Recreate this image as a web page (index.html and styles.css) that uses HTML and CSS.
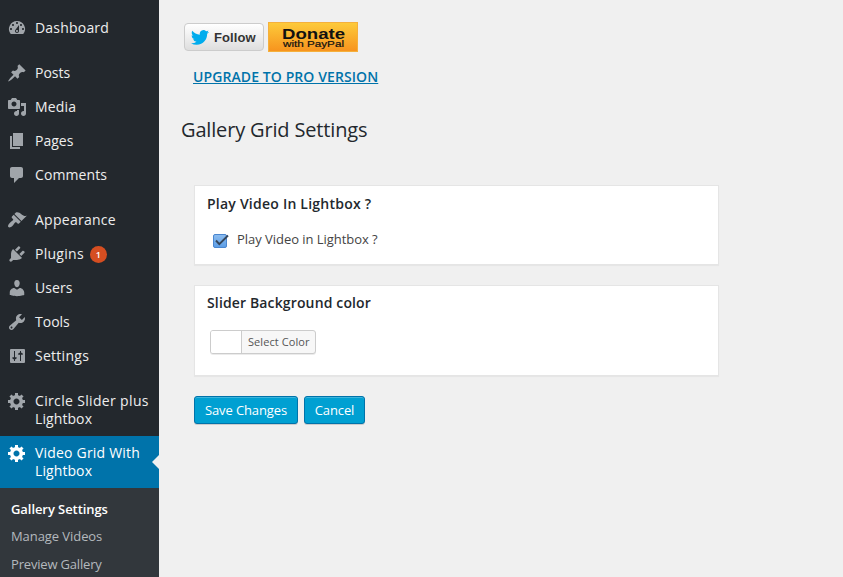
FILE: index.html
```html
<!DOCTYPE html>
<html lang="en">
<head>
<meta charset="utf-8">
<title>Gallery Grid Settings</title>
<link rel="stylesheet" href="styles.css">
</head>
<body>
<nav class="sidebar">
  <ul class="menu">
    <li class="item"><svg class="icon" viewBox="0 0 20 20"><path d="M3.76 16h12.48A7.998 7.998 0 0 0 10 3a7.998 7.998 0 0 0-6.24 13zM10 4c.55 0 1 .45 1 1s-.45 1-1 1-1-.45-1-1 .45-1 1-1zM6 6c.55 0 1 .45 1 1s-.45 1-1 1-1-.45-1-1 .45-1 1-1zm8 0c.55 0 1 .45 1 1s-.45 1-1 1-1-.45-1-1 .45-1 1-1zm-5.37 5.55L12 7v6c0 1.1-.9 2-2 2s-2-.9-2-2c0-.57.24-1.08.63-1.45zM4 10c.55 0 1 .45 1 1s-.45 1-1 1-1-.45-1-1 .45-1 1-1zm12 0c.55 0 1 .45 1 1s-.45 1-1 1-1-.45-1-1 .45-1 1-1zm-5 3c0-.55-.45-1-1-1s-1 .45-1 1 .45 1 1 1 1-.45 1-1z"/></svg><span class="loose">Dashboard</span></li>
    <li class="item group"><svg class="icon" viewBox="0 0 20 20"><path d="M10.44 3.02l1.82-1.82 6.36 6.35-1.83 1.82c-1.05-.68-2.48-.57-3.41.36l-.75.75c-.92.93-1.04 2.35-.35 3.41l-1.83 1.82-2.41-2.41-2.8 2.79c-.42.42-3.38 2.71-3.8 2.29s1.86-3.39 2.28-3.81l2.79-2.79L4.1 9.36l1.83-1.82c1.05.69 2.48.57 3.4-.36l.75-.75c.93-.92 1.05-2.35.36-3.41z"/></svg><span>Posts</span></li>
    <li class="item"><svg class="icon" viewBox="0 0 20 20"><path d="M13 11V4c0-.55-.45-1-1-1h-1.67L9 1H5L3.67 3H2c-.55 0-1 .45-1 1v7c0 .55.45 1 1 1h10c.55 0 1-.45 1-1zM7 4.5c1.38 0 2.5 1.12 2.5 2.5S8.38 9.5 7 9.5 4.5 8.38 4.5 7 5.62 4.5 7 4.5zM14 6h5v10.5c0 1.38-1.12 2.5-2.5 2.5S14 17.88 14 16.5s1.12-2.5 2.5-2.5c.17 0 .34.02.5.05V9h-3V6zm-4 8.05V13h2v3.5c0 1.38-1.12 2.5-2.5 2.5S7 17.88 7 16.5 8.12 14 9.5 14c.17 0 .34.02.5.05z"/></svg><span class="loose">Media</span></li>
    <li class="item"><svg class="icon" viewBox="0 0 20 20"><path d="M6 15V2h10v13H6zm-1 1h8v2H3V5h2v11z"/></svg><span>Pages</span></li>
    <li class="item"><svg class="icon" viewBox="0 0 20 20"><path d="M5 2h9c1.1 0 2 .9 2 2v7c0 1.1-.9 2-2 2h-2l-5 5v-5H5c-1.1 0-2-.9-2-2V4c0-1.1.9-2 2-2z"/></svg><span class="slight">Comments</span></li>
    <li class="item group"><svg class="icon" viewBox="0 0 20 20"><path d="M14.48 11.06L7.41 3.99l1.5-1.5c.5-.56 2.3-.47 3.51.32 1.21.8 1.43 1.28 2.91 2.1 1.18.64 2.45 1.26 4.45.85zm-.71.71L6.7 4.7 4.93 6.47c-.39.39-.39 1.02 0 1.41l1.06 1.06c.39.39.39 1.03 0 1.42-.6.6-1.43 1.11-2.21 1.69-.35.26-.7.53-1.01.84C1.43 14.23.4 16.08 1.4 17.07c.99 1 2.84-.03 4.18-1.36.31-.31.58-.66.85-1.02.57-.78 1.08-1.61 1.69-2.21.39-.39 1.02-.39 1.41 0l1.06 1.06c.39.39 1.02.39 1.41 0z"/></svg><span class="wide">Appearance</span></li>
    <li class="item"><svg class="icon" viewBox="0 0 20 20"><path d="M13.11 4.36L9.87 7.6 8 5.73l3.24-3.24c.35-.34 1.05-.2 1.56.32.52.51.66 1.21.31 1.55zm-8 1.77l.91-1.12 9.01 9.01-1.19.84c-.71.71-2.63 1.16-3.82 1.16H6.14L4.9 17.26c-.59.59-1.54.59-2.12 0-.59-.58-.59-1.53 0-2.12l1.24-1.24v-3.88c0-1.13.4-3.19 1.09-3.89zm7.26 3.97l3.24-3.24c.34-.35 1.04-.21 1.55.31.52.51.66 1.21.31 1.55l-3.24 3.25z"/></svg><span class="wide">Plugins</span><b class="count">1</b></li>
    <li class="item"><svg class="icon" viewBox="0 0 20 20"><path d="M10 9.25c-2.27 0-2.73-3.44-2.73-3.44C7 4.02 7.82 2 9.97 2c2.16 0 2.98 2.02 2.71 3.81 0 0-.41 3.44-2.68 3.44zm0 2.57L12.72 10c2.39 0 4.52 2.33 4.52 4.53v2.49s-3.65 1.13-7.24 1.13c-3.65 0-7.24-1.13-7.24-1.13v-2.49c0-2.25 1.94-4.48 4.47-4.48z"/></svg><span class="slight">Users</span></li>
    <li class="item"><svg class="icon" viewBox="0 0 20 20"><path d="M16.68 9.77c-1.34 1.34-3.3 1.67-4.95.99l-5.41 6.52c-.99.99-2.59.99-3.58 0s-.99-2.59 0-3.57l6.52-5.42c-.68-1.65-.35-3.61.99-4.95 1.28-1.28 3.12-1.62 4.72-1.06l-2.89 2.89 2.82 2.82 2.86-2.87c.53 1.58.18 3.39-1.08 4.65zM3.81 16.21c.4.39 1.04.39 1.43 0 .4-.4.4-1.04 0-1.43-.39-.4-1.03-.4-1.43 0-.39.39-.39 1.03 0 1.43z"/></svg><span>Tools</span></li>
    <li class="item"><svg class="icon" viewBox="0 0 20 20"><path fill-rule="evenodd" d="M4 3h13q1 0 1 1v12q0 1-1 1H4q-1 0-1-1V4q0-1 1-1zM7 5v6.2H5.4v1.4L7 13.4V15h1v-1.6l1.6-.8v-1.4H8V5zM13 5v1.6l-1.8.8v1.4H13V15h1V8.800h1.800V7.400L14 6.600V5z"/></svg><span class="wide">Settings</span></li>
    <li class="item group"><svg class="icon" viewBox="0 0 20 20"><path d="M18 12h-2.18c-.17.7-.44 1.35-.81 1.93l1.54 1.54-2.1 2.1-1.54-1.54c-.58.36-1.23.63-1.91.79V19H8v-2.18c-.68-.16-1.33-.43-1.91-.79l-1.54 1.54-2.12-2.12 1.54-1.54c-.36-.58-.63-1.23-.79-1.91H1V9.03h2.17c.16-.7.44-1.35.8-1.94L2.43 5.55l2.1-2.1 1.54 1.54c.58-.37 1.24-.64 1.93-.81V2h3v2.18c.68.16 1.33.43 1.91.79l1.54-1.54 2.12 2.12-1.54 1.54c.36.59.64 1.24.8 1.94H18V12zm-8.5 1.5c1.66 0 3-1.34 3-3s-1.34-3-3-3-3 1.34-3 3 1.34 3 3 3z"/></svg><span><span class="widest">Circle Slider plus</span><br><span class="slight">Lightbox</span></span></li>
    <li class="item current"><svg class="icon" viewBox="0 0 20 20"><path d="M18 12h-2.18c-.17.7-.44 1.35-.81 1.93l1.54 1.54-2.1 2.1-1.54-1.54c-.58.36-1.23.63-1.91.79V19H8v-2.18c-.68-.16-1.33-.43-1.91-.79l-1.54 1.54-2.12-2.12 1.54-1.54c-.36-.58-.63-1.23-.79-1.91H1V9.03h2.17c.16-.7.44-1.35.8-1.94L2.43 5.55l2.1-2.1 1.54 1.54c.58-.37 1.24-.64 1.93-.81V2h3v2.18c.68.16 1.33.43 1.91.79l1.54-1.54 2.12 2.12-1.54 1.54c.36.59.64 1.24.8 1.94H18V12zm-8.5 1.5c1.66 0 3-1.34 3-3s-1.34-3-3-3-3 1.34-3 3 1.34 3 3 3z"/></svg><span><span class="loose">Video Grid With</span><br><span class="slight">Lightbox</span></span></li>
  </ul>
  <ul class="submenu">
    <li class="active">Gallery Settings</li>
    <li>Manage Videos</li>
    <li class="preview">Preview Gallery</li>
  </ul>
</nav>
<main class="content">
  <div class="promo">
    <a class="follow"><svg class="bird" viewBox="0 2 24 20" preserveAspectRatio="none"><path d="M23.953 4.57a10 10 0 01-2.825.775 4.958 4.958 0 002.163-2.723c-.951.555-2.005.959-3.127 1.184a4.92 4.92 0 00-8.384 4.482C7.69 8.095 4.067 6.13 1.64 3.162a4.822 4.822 0 00-.666 2.475c0 1.71.87 3.213 2.188 4.096a4.904 4.904 0 01-2.228-.616v.06a4.923 4.923 0 003.946 4.827 4.996 4.996 0 01-2.212.085 4.936 4.936 0 004.604 3.417 9.867 9.867 0 01-6.102 2.105c-.39 0-.779-.023-1.17-.067a13.995 13.995 0 007.557 2.209c9.053 0 13.998-7.496 13.998-13.985 0-.21 0-.42-.015-.63A9.935 9.935 0 0024 4.59z"/></svg><span>Follow</span></a>
    <a class="donate"><svg width="90" height="30"><text class="donate-big" x="14" y="16.500" textLength="63" lengthAdjust="spacingAndGlyphs">Donate</text><text class="donate-small" x="15" y="24.500" textLength="61" lengthAdjust="spacingAndGlyphs">with PayPal</text></svg></a>
  </div>
  <a class="upgrade">UPGRADE TO PRO VERSION</a>
  <h1>Gallery Grid Settings</h1>
  <section class="card video">
    <h2>Play Video In Lightbox ?</h2>
    <label class="check"><svg width="18" height="16" viewBox="0 0 18 16"><defs><linearGradient id="box" x2="0" y2="1"><stop offset="0" stop-color="#8dbdf0"/><stop offset="1" stop-color="#5b9de6"/></linearGradient></defs><rect x="1.500" y="1.500" width="13" height="13" rx="1.500" fill="url(#box)" stroke="#4a86cf"/><path d="M4 7.500l3.300 3.700L16 2.500" fill="none" stroke="#34465c" stroke-width="1.900"/></svg><span>Play Video in Lightbox ?</span></label>
  </section>
  <section class="card color">
    <h2>Slider Background color</h2>
    <div class="picker"><i></i><span>Select Color</span></div>
  </section>
  <div class="actions"><button class="save">Save Changes</button><button class="cancel">Cancel</button></div>
</main>
</body>
</html>
```
FILE: styles.css
```css
* { box-sizing: border-box; }
body {
  margin: 0;
  height: 577px;
  display: flex;
  overflow: hidden;
  background: #f0f0f0;
  color: #444;
  font: 13px/18px "Open Sans", sans-serif;
}
ul { margin: 0; padding: 0; list-style: none; }
.sidebar { width: 159px; flex: none; background: #23282d; display: flex; flex-direction: column; }
.menu { padding-top: 11px; }
.item {
  display: flex;
  align-items: flex-start;
  padding: 8px 0 8px 7px;
  color: #eee;
  font-size: 14px;
  line-height: 18px;
  white-space: nowrap;
}
.group { margin-top: 11px; }
.slight { letter-spacing: .09px; }
.loose { letter-spacing: .2px; }
.wide { letter-spacing: .27px; }
.widest { letter-spacing: .34px; }
.icon { width: 20px; height: 20px; margin: -1px 8px -1px 0; flex: none; fill: #a0a5aa; }
.count {
  width: 17px;
  height: 17px;
  margin: 1px 0 0 6px;
  border-radius: 50%;
  background: #d54e21;
  color: #fff;
  font-size: 9px;
  font-weight: 600;
  line-height: 17px;
  text-align: center;
}
.current { position: relative; background: #0073aa; color: #fff; }
.current .icon { fill: #fff; }
.current::after {
  content: "";
  position: absolute;
  right: -1px;
  top: 18px;
  border: 8px solid transparent;
  border-left: 0;
  border-right: 8px solid #f0f0f0;
}
.submenu { flex: 1; padding: 8px 0 0 11px; background: #32373c; color: #b4b9be; }
.submenu li { height: 27.5px; line-height: 25px; letter-spacing: -.07px; white-space: nowrap; }
.submenu .active { color: #fff; font-weight: 600; line-height: 27px; }
.submenu .preview { letter-spacing: -.18px; line-height: 27px; }

.content { flex: 1; padding: 22px 0 0 22px; }
.promo { display: flex; gap: 4px; padding-left: 3px; height: 30px; }
.follow {
  display: flex;
  align-items: center;
  width: 80px;
  height: 28px;
  margin-top: 1px;
  padding-left: 6px;
  gap: 5px;
  border: 1px solid #ccc;
  border-radius: 4px;
  background: linear-gradient(#fff, #dedede);
  color: #333;
  font: bold 13px "Liberation Sans", sans-serif;
  letter-spacing: .1px;
}
.bird { width: 18px; height: 15px; margin-top: 1px; fill: #00aced; }
.donate { width: 90px; height: 30px; background: linear-gradient(#fdca3a, #f7941e); border: 1px solid #f5b03c; }
.donate svg { display: block; margin: -1px; }
.donate text { font-family: "Liberation Sans", sans-serif; fill: #111; }
.donate .donate-big { font-size: 14px; font-weight: bold; }
.donate .donate-small { font-size: 9px; stroke: #111; stroke-width: .2px; }
.upgrade {
  display: block;
  margin: 16px 0 0 12px;
  color: #0073aa;
  font-size: 14px;
  font-weight: 600;
  letter-spacing: .09px;
  text-decoration: underline;
}
h1 { margin: 29px 0 0; color: #23282d; font-size: 20px; font-weight: 400; line-height: 30px; letter-spacing: -.16px; }
.card {
  width: 525px;
  margin-left: 13px;
  padding: 9px 12px;
  border: 1px solid #e5e5e5;
  background: #fff;
  box-shadow: 0 1px 1px rgba(0, 0, 0, .04);
}
.video { height: 80px; margin-top: 40px; }
.color { height: 91px; margin-top: 20px; padding-top: 8px; }
h2 { margin: 0; color: #23282d; font-size: 14px; font-weight: 600; line-height: 18px; letter-spacing: .23px; }
.color h2 { letter-spacing: .14px; }
.check { display: flex; align-items: center; gap: 7px; margin: 17px 0 0 5px; letter-spacing: -.04px; }
.check svg { margin-top: 3px; }
.check span { margin-top: -2px; }
.picker {
  display: flex;
  width: 106px;
  height: 24px;
  margin: 18px 0 0 3px;
  border: 1px solid #ccc;
  border-radius: 3px;
  background: #f7f7f7;
  box-shadow: 0 1px 0 rgba(0, 0, 0, .08);
  color: #555;
  font-size: 11px;
  line-height: 22px;
  letter-spacing: .08px;
  white-space: nowrap;
}
.picker i { width: 31px; border-right: 1px solid #ccc; border-radius: 2px 0 0 2px; background: #fff; }
.picker span { padding-left: 6px; }
.actions { display: flex; gap: 6px; margin: 20px 0 0 13px; }
button {
  height: 28px;
  padding: 0;
  border: 1px solid #0073aa;
  border-radius: 3px;
  background: #00a0d2;
  box-shadow: inset 0 1px 0 rgba(120, 200, 230, .5), 0 1px 0 rgba(0, 0, 0, .15);
  color: #fff;
  font: 13px/26px "Open Sans", sans-serif;
  letter-spacing: -.12px;
}
.save { width: 104px; }
.cancel { width: 61px; }
```
